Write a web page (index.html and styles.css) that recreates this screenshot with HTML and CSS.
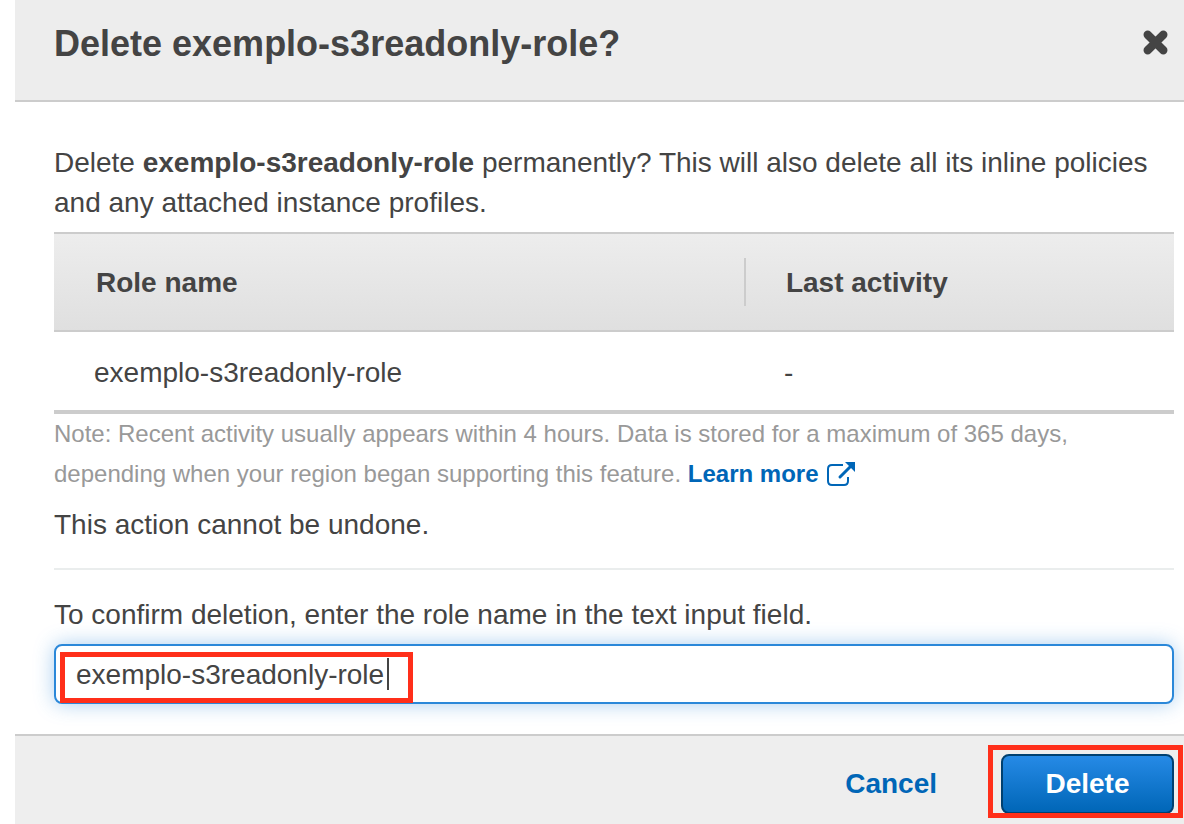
FILE: index.html
```html
<!DOCTYPE html>
<html lang="en">
<head>
<meta charset="utf-8">
<meta name="viewport" content="width=device-width, initial-scale=1">
<title>Delete role</title>
<link rel="stylesheet" href="styles.css">
</head>
<body>
<main class="dialog" role="dialog" aria-labelledby="dialog-title">
  <header class="dialog-header">
    <h1 class="dialog-title" id="dialog-title">Delete exemplo-s3readonly-role?</h1>
    <button class="close" type="button" aria-label="Close">
      <svg class="close-icon" viewBox="0 0 24 24" aria-hidden="true"><path d="M4.500 4.500L19.500 19.500M19.500 4.500L4.500 19.500"/></svg>
    </button>
  </header>
  <form class="dialog-form">
    <div class="dialog-body">
      <p class="text">Delete <strong>exemplo-s3readonly-role</strong> permanently? This will also delete all its inline policies and any attached instance profiles.</p>
      <table class="roles">
        <thead>
          <tr><th class="col-name" scope="col">Role name</th><th class="col-activity" scope="col"><span class="divider"></span>Last activity</th></tr>
        </thead>
        <tbody>
          <tr><td>exemplo-s3readonly-role</td><td>-</td></tr>
        </tbody>
      </table>
      <p class="note">Note: Recent activity usually appears within 4 hours. Data is stored for a maximum of 365 days, depending when your region began supporting this feature. <a class="learn" href="#learn">Learn more <svg class="external-icon" viewBox="0 0 28 24" aria-hidden="true"><path class="external-frame" d="M16 3H5Q1 3 1 7V19Q1 23 5 23H17Q21 23 21 19V15"/><path class="external-shaft" d="M13 15L23 5"/><path class="external-head" d="M18 0H28V10Z"/></svg></a></p>
      <p class="text warning">This action cannot be undone.</p>
      <label class="confirm-label" for="role-name">To confirm deletion, enter the role name in the text input field.</label>
      <div class="field">
        <input class="field-input" id="role-name" type="text" value="exemplo-s3readonly-role" autocomplete="off" spellcheck="false">
        <span class="field-mark"></span>
        <span class="caret"></span>
      </div>
    </div>
    <footer class="dialog-footer">
      <button class="cancel" type="button">Cancel</button>
      <div class="delete-wrap"><button class="delete" type="submit">Delete</button></div>
    </footer>
  </form>
</main>
</body>
</html>
```
FILE: styles.css
```css
* {
  box-sizing: border-box;
}

body {
  margin: 0;
  background: #fff;
  color: #444;
  font: 28px/40px "Helvetica Neue", "Liberation Sans", Arial, sans-serif;
}

button,
input {
  font: inherit;
  color: inherit;
}

button {
  cursor: pointer;
}

.dialog {
  display: flex;
  flex-direction: column;
  min-height: 100vh;
  margin-left: 15px;
}

.dialog-header {
  display: flex;
  align-items: flex-start;
  justify-content: space-between;
  padding: 24px 16px 36px 39px;
  background: #ededed;
  border-bottom: 2px solid #ccc;
}

.dialog-title {
  margin: 0;
  font-size: 36px;
  line-height: 40px;
}

.close {
  display: flex;
  align-items: center;
  height: 36px;
  padding: 0;
  border: 0;
  background: none;
}

.close-icon {
  width: 25px;
  height: 25px;
  fill: none;
  stroke: #444;
  stroke-width: 8;
  stroke-linecap: round;
}

.dialog-form {
  display: flex;
  flex: 1;
  flex-direction: column;
}

.dialog-body {
  padding: 41px 10px 30px 39px;
}

.text {
  margin: 0;
}

.roles {
  width: 100%;
  margin-top: 9px;
  border-spacing: 0;
  border-top: 2px solid #ccc;
  border-bottom: 4px solid #ccc;
  table-layout: fixed;
  text-align: left;
}

.roles thead {
  background: linear-gradient(#ededed, #dfdfdf);
}

.roles th {
  position: relative;
  padding: 29px 42px 27px;
  border-bottom: 2px solid #ccc;
}

.roles td {
  padding: 21px 40px 17px;
}

.col-name {
  width: 61.6%;
}

.divider {
  position: absolute;
  top: 24px;
  bottom: 24px;
  left: 0;
  width: 2px;
  background: #ccc;
}

.note {
  margin: 0;
  color: #999;
  font-size: 24px;
}

.learn {
  color: #0066b7;
  font-weight: bold;
  text-decoration: none;
  white-space: nowrap;
}

.external-icon {
  width: 28px;
  height: 24px;
  margin-left: 2px;
  vertical-align: -4px;
  fill: none;
  stroke: currentColor;
}

.external-frame {
  stroke-width: 2;
}

.external-shaft {
  stroke-width: 3;
  stroke-linecap: round;
}

.external-head {
  fill: currentColor;
  stroke: none;
}

.warning {
  margin-top: 11px;
  padding-bottom: 23px;
  border-bottom: 2px solid #eaeded;
}

.confirm-label {
  display: block;
  margin: 25px 0 9px;
}

.field {
  position: relative;
}

.field-input {
  display: block;
  width: 100%;
  height: 60px;
  padding: 2px 20px 0;
  border: 2px solid #2b88d9;
  border-radius: 8px;
  outline: 0;
  background: #fff;
  box-shadow: 0 0 20px rgba(43, 136, 217, 0.4);
}

.field-mark {
  position: absolute;
  top: 8px;
  left: 6px;
  width: 353px;
  height: 51px;
  border: 5px solid #ff2f1a;
  pointer-events: none;
}

.caret {
  position: absolute;
  top: 14px;
  left: 333px;
  width: 2px;
  height: 32px;
  background: #444;
  pointer-events: none;
}

.dialog-footer {
  display: flex;
  flex: 1;
  align-items: flex-start;
  justify-content: flex-end;
  gap: 64px;
  padding: 18px 10px 10px;
  background: #eee;
  border-top: 2px solid #ccc;
}

.cancel {
  height: 60px;
  padding: 0;
  border: 0;
  background: none;
  color: #0066b7;
  font-weight: bold;
}

.delete-wrap {
  position: relative;
}

.delete-wrap::after {
  content: "";
  position: absolute;
  inset: -9px -9px -4px -13px;
  border: 5px solid #ff2f1a;
  pointer-events: none;
}

.delete {
  display: block;
  min-width: 173px;
  height: 60px;
  padding: 0 40px;
  border: 2px solid #004070;
  border-radius: 8px;
  background: linear-gradient(#268ae6, #0066b7);
  color: #fff;
  font-weight: bold;
}
```
